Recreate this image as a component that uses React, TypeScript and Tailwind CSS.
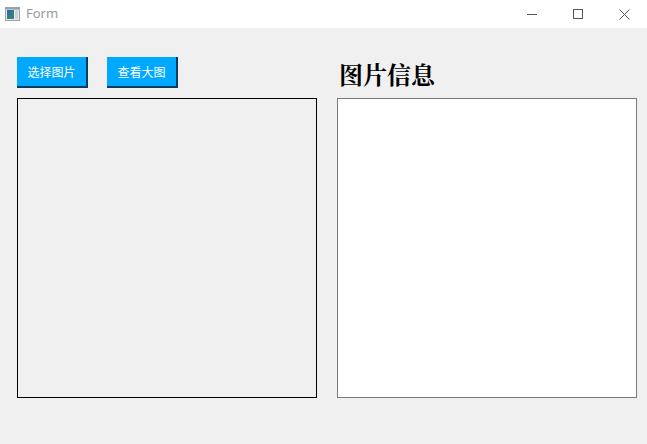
import React from "react";

export default function App() {
  return (
    <div className="w-[647px] h-[444px] bg-[#f0f0f0] overflow-hidden flex flex-col" style={{ fontFamily: '"Microsoft YaHei","Noto Sans CJK SC",sans-serif' }}>
      <div className="h-[28px] bg-white flex items-center shrink-0">
        <svg className="ml-[5px]" width="15" height="14" viewBox="0 0 15 14">
          <rect x="0.5" y="0.5" width="14" height="13" fill="#e8e8e8" stroke="#9aa3ab" />
          <rect x="2" y="3" width="7" height="9" fill="#3a7f7a" />
          <rect x="2" y="3" width="4" height="5" fill="#2f6db0" />
          <rect x="10" y="3" width="3" height="9" fill="#c9d4dc" />
          <rect x="1" y="1" width="13" height="1.5" fill="#8fa0ae" />
        </svg>
        <span className="ml-[6px] text-[13px] text-[#9a9a9a]" style={{ fontFamily: '"Segoe UI","Noto Sans","Liberation Sans",sans-serif' }}>Form</span>
        <div className="ml-auto flex items-center h-full">
          <div className="w-[46px] h-full flex items-center justify-center">
            <div className="w-[10px] h-px bg-[#555]" />
          </div>
          <div className="w-[46px] h-full flex items-center justify-center">
            <div className="w-[10px] h-[10px] border border-[#555]" />
          </div>
          <div className="w-[46px] h-full flex items-center justify-center">
            <svg width="11" height="11" viewBox="0 0 11 11">
              <path d="M0.5 0.5 L10.5 10.5 M10.5 0.5 L0.5 10.5" stroke="#555" strokeWidth="1" />
            </svg>
          </div>
        </div>
      </div>
      <div className="flex gap-[20px] pl-[17px] pt-[29px]">
        <div className="flex flex-col">
          <div className="flex gap-[19px] h-[31px]">
            <button className="w-[71px] h-[31px] bg-[#00a8ff] text-white text-[12px] border-r-2 border-b-2 border-[#0a3c5c] flex items-center justify-center pt-[1px]">选择图片</button>
            <button className="w-[71px] h-[31px] bg-[#00a8ff] text-white text-[12px] border-r-2 border-b-2 border-[#0a3c5c] flex items-center justify-center pt-[1px]">查看大图</button>
          </div>
          <div className="mt-[10px] w-[300px] h-[300px] border border-black" />
        </div>
        <div className="flex flex-col">
          <div className="h-[41px] flex items-center pl-[2px] pb-[8px] text-[24px] leading-none font-bold text-black" style={{ fontFamily: '"SimSun","Noto Serif CJK SC","Noto Sans CJK SC",serif' }}>图片信息</div>
          <div className="w-[300px] h-[300px] border border-[#7a7a7a] bg-white" />
        </div>
      </div>
    </div>
  );
}
